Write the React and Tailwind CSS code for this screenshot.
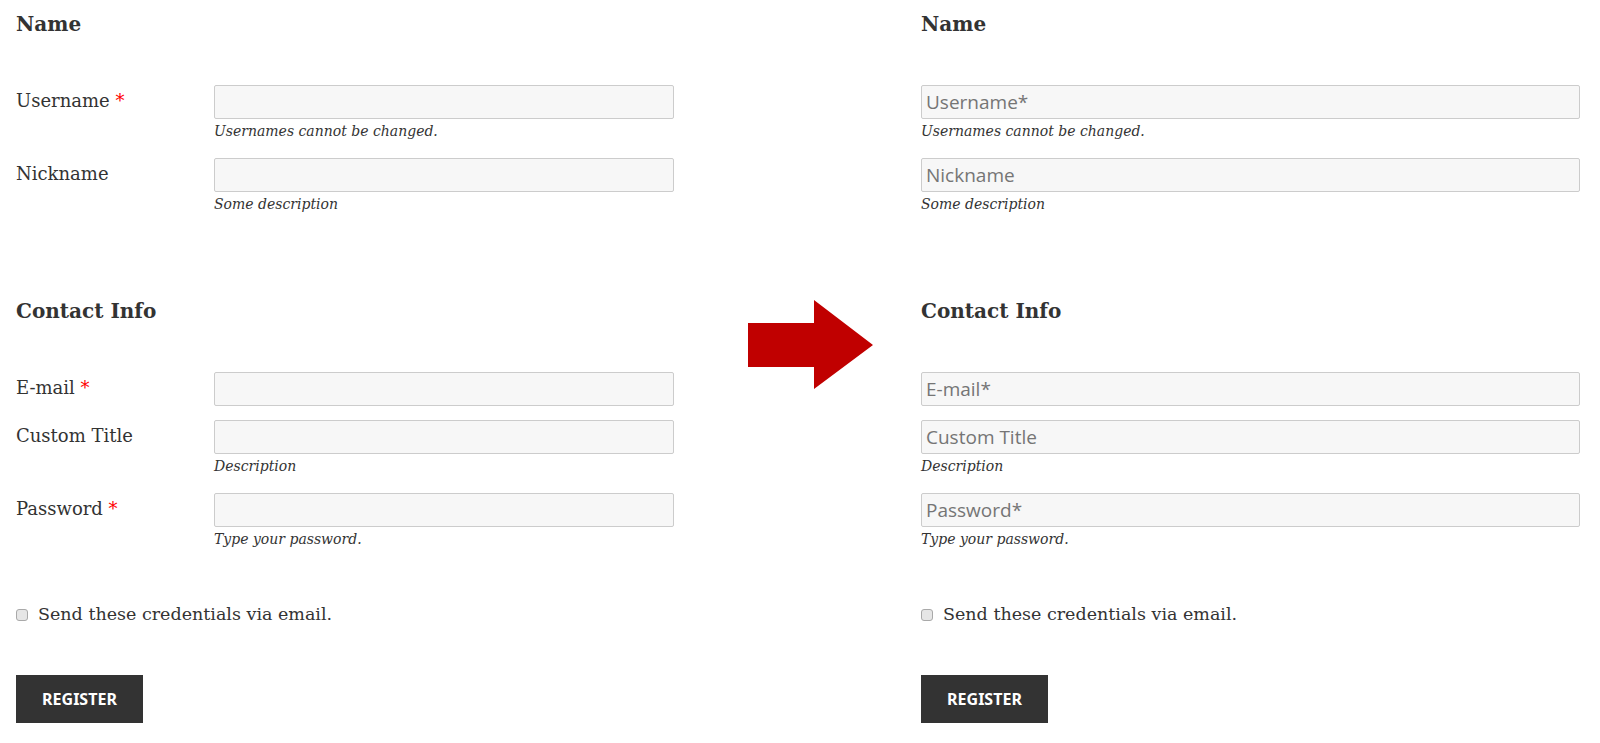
import React from 'react';

const nameFields = [
  { label: 'Username', required: true, desc: 'Usernames cannot be changed.' },
  { label: 'Nickname', desc: 'Some description' },
];

const contactFields = [
  { label: 'E-mail', required: true },
  { label: 'Custom Title', desc: 'Description' },
  { label: 'Password', required: true, desc: 'Type your password.', type: 'password' },
];

function Heading({ children, className = '' }) {
  return (
    <h3 className={`text-[20px] leading-[32px] font-bold text-[#333] ${className}`}>{children}</h3>
  );
}

function Desc({ text }) {
  if (!text) return null;
  return <p className="text-[14px] leading-[25px] italic text-[#333]">{text}</p>;
}

function Input({ placeholder, type = 'text' }) {
  return (
    <input
      type={type}
      placeholder={placeholder}
      className="block w-full h-[34px] px-[4px] bg-[#f7f7f7] border border-[#cccccc] rounded-[2px] font-['Open_Sans',sans-serif] text-[19px] text-[#333] placeholder:text-[#757575] outline-none"
    />
  );
}

// old layout: label on the left, field on the right
function LabeledRow({ field }) {
  return (
    <div className="flex mb-[14px]">
      <label className="w-[198px] shrink-0 text-[18px] leading-[32px] text-[#333]">
        {field.label}
        {field.required && <span className="text-[#ff0000]"> *</span>}
      </label>
      <div className="flex-1">
        <Input type={field.type} />
        <Desc text={field.desc} />
      </div>
    </div>
  );
}

// new layout: label moved into the placeholder
function PlaceholderRow({ field }) {
  return (
    <div className="mb-[14px]">
      <Input type={field.type} placeholder={field.label + (field.required ? '*' : '')} />
      <Desc text={field.desc} />
    </div>
  );
}

function Footer() {
  return (
    <>
      <label className="flex items-center gap-[10px] mt-[48px] text-[17.5px] leading-[28px] text-[#333]">
        <input
          type="checkbox"
          className="appearance-none w-[12px] h-[12px] mt-[1px] border border-[#a9a9a9] rounded-[3px] bg-[#e6e6e6]"
        />
        Send these credentials via email.
      </label>
      <button className="mt-[47px] w-[127px] h-[48px] bg-[#333] text-white font-['Noto_Sans',sans-serif] font-bold text-[16px] uppercase">
        Register
      </button>
    </>
  );
}

function Form({ Row }) {
  return (
    <div>
      <Heading className="mt-[8px] mb-[45px]">Name</Heading>
      {nameFields.map((f) => <Row key={f.label} field={f} />)}
      <Heading className="mt-[78px] mb-[45px]">Contact Info</Heading>
      {contactFields.map((f) => <Row key={f.label} field={f} />)}
      <Footer />
    </div>
  );
}

export default function App() {
  return (
    <div className="flex bg-white min-h-[743px] font-['DejaVu_Serif',serif]">
      <div className="w-[674px] pl-[16px] shrink-0">
        <Form Row={LabeledRow} />
      </div>
      <div className="w-[247px] shrink-0 pt-[300px] pl-[74px]">
        <svg width="125" height="89" viewBox="0 0 125 89">
          <polygon points="0,23 66,23 66,0 125,45 66,89 66,67 0,67" fill="#c00000" />
        </svg>
      </div>
      <div className="w-[659px] shrink-0">
        <Form Row={PlaceholderRow} />
      </div>
    </div>
  );
}
